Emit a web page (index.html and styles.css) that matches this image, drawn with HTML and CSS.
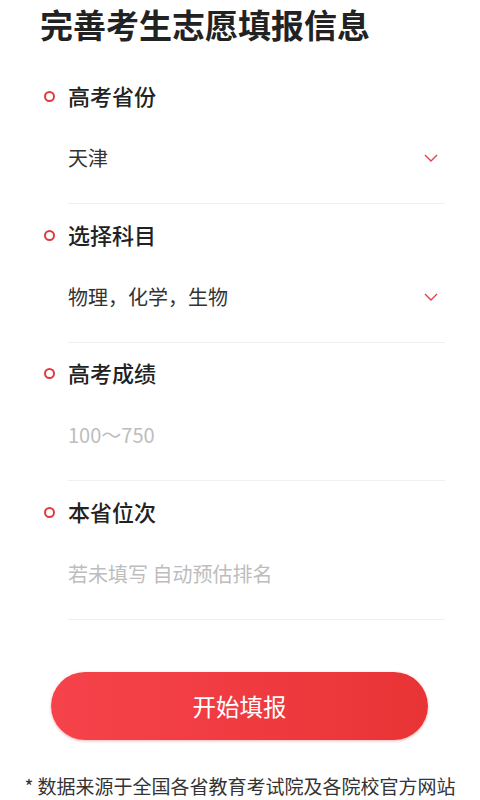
FILE: index.html
```html
<!DOCTYPE html>
<html lang="zh-CN">
<head>
<meta charset="utf-8">
<link rel="stylesheet" href="styles.css">
</head>
<body>
<div class="page">
  <h1 class="title">完善考生志愿填报信息</h1>

  <div class="field">
    <div class="label"><span class="dot"></span>高考省份</div>
    <div class="value">
      <span class="text">天津</span>
      <svg class="chev" width="14" height="8" viewBox="0 0 14 8"><path d="M1 1 L7 7 L13 1" fill="none" stroke="#e2404a" stroke-width="1.4"/></svg>
    </div>
  </div>

  <div class="field">
    <div class="label"><span class="dot"></span>选择科目</div>
    <div class="value">
      <span class="text">物理，化学，生物</span>
      <svg class="chev" width="14" height="8" viewBox="0 0 14 8"><path d="M1 1 L7 7 L13 1" fill="none" stroke="#e2404a" stroke-width="1.4"/></svg>
    </div>
  </div>

  <div class="field">
    <div class="label"><span class="dot"></span>高考成绩</div>
    <div class="value">
      <span class="text placeholder">100～750</span>
    </div>
  </div>

  <div class="field">
    <div class="label"><span class="dot"></span>本省位次</div>
    <div class="value">
      <span class="text placeholder">若未填写 自动预估排名</span>
    </div>
  </div>

  <button class="submit">开始填报</button>

  <p class="note">* 数据来源于全国各省教育考试院及各院校官方网站</p>
</div>
</body>
</html>
```

FILE: styles.css
```css
* { box-sizing: border-box; }
html, body { margin: 0; padding: 0; background: #fff; }
body {
  font-family: "Noto Sans CJK SC", "Noto Sans", sans-serif;
  color: #222;
}
.page {
  width: 480px;
  padding-top: 4px;
}
.title {
  margin: 0 0 0 40px;
  font-size: 33px;
  line-height: 40px;
  font-weight: bold;
  color: #222;
}
.field {
  margin-top: 14.7px;
}
.field:first-of-type { margin-top: 36px; }
.label {
  display: flex;
  align-items: center;
  padding-left: 44px;
  font-size: 22px;
  line-height: 30px;
  font-weight: 500;
  color: #222;
}
.dot {
  width: 11px;
  height: 11px;
  border: 2.6px solid #e03a40;
  border-radius: 50%;
  margin-right: 13px;
  margin-top: 3px;
  flex: none;
}
.value {
  margin: 33px 35px 0 68px;
  padding-bottom: 30px;
  border-bottom: 1px solid #efefef;
  display: flex;
  justify-content: space-between;
  align-items: flex-start;
  height: 61px;
}
.text {
  font-size: 20px;
  line-height: 30px;
  color: #333;
}
.placeholder { color: #bdbdbd; }
.chev {
  margin-top: 11px;
  margin-right: 7px;
}
.submit {
  display: block;
  margin: 52px 0 0 51px;
  width: 377px;
  height: 68px;
  border: none;
  border-radius: 34px;
  background: linear-gradient(90deg, #f6434b 0%, #e93436 100%);
  box-shadow: 0 1px 3px rgba(200, 40, 40, 0.35);
  color: #fff;
  font-family: "Noto Sans CJK SC", "Noto Sans", sans-serif;
  font-size: 23.5px;
  padding: 0;
}
.note {
  margin: 32px 0 0 0;
  text-align: center;
  font-size: 19px;
  line-height: 28px;
  color: #333;
}
```
